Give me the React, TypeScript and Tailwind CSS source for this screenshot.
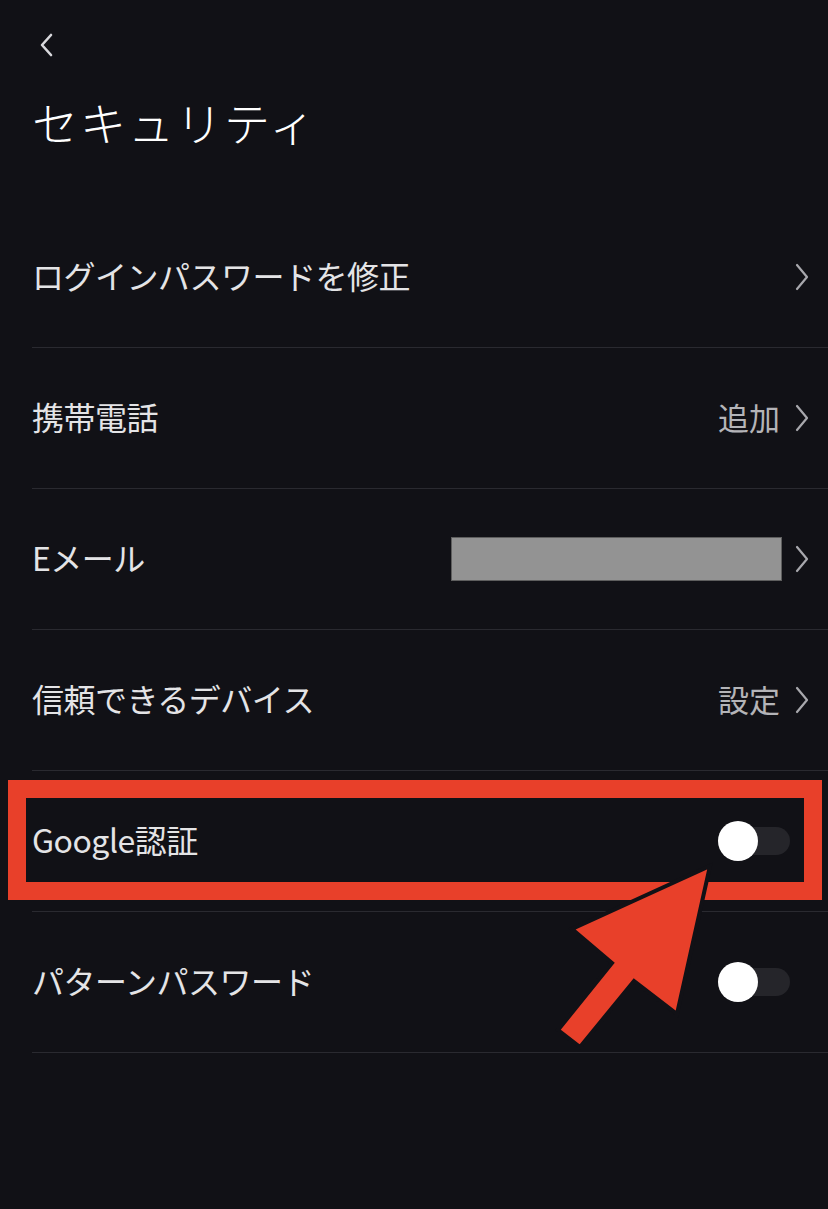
import React from "react";

const font = { fontFamily: '"Noto Sans CJK JP", "Noto Sans", sans-serif' };

function Chevron() {
  return (
    <svg width="16" height="28" viewBox="0 0 16 28" className="shrink-0">
      <path d="M3 2 L13 14 L3 26" fill="none" stroke="#a8a8ad" strokeWidth="2.2" strokeLinecap="round" strokeLinejoin="round" />
    </svg>
  );
}

function Toggle() {
  return (
    <div className="relative w-[72px] h-[28px] rounded-full bg-[#25252a]">
      <div className="absolute left-0 top-[-6px] w-[40px] h-[40px] rounded-full bg-white" />
    </div>
  );
}

function Row({ label, right }: { label: string; right: React.ReactNode }) {
  return (
    <div className="ml-8 h-[141px] border-b border-[#2a2a30] flex items-center justify-between">
      <span className="text-[32px] leading-none text-[#e4e4e6] tracking-[-0.5px] pb-[4px]">{label}</span>
      {right}
    </div>
  );
}

export default function App() {
  return (
    <div className="relative w-full h-[1209px] bg-[#111116] overflow-hidden" style={font}>
      <div className="pt-[32px] pl-[38px]">
        <svg width="18" height="26" viewBox="0 0 18 26">
          <path d="M13 3 L4 13 L13 23" fill="none" stroke="#d8d8dc" strokeWidth="2.6" strokeLinecap="round" strokeLinejoin="round" />
        </svg>
      </div>
      <h1 className="mt-[40px] ml-[32px] text-[46px] leading-none text-white font-light tracking-[2px]">セキュリティ</h1>
      <div className="mt-[63px]">
        <Row label="ログインパスワードを修正" right={<div className="pr-[18px]"><Chevron /></div>} />
        <Row
          label="携帯電話"
          right={
            <div className="flex items-center gap-[14px] pr-[18px]">
              <span className="text-[31px] leading-none text-[#b4b4b8] pb-[4px]">追加</span>
              <Chevron />
            </div>
          }
        />
        <Row
          label="Eメール"
          right={
            <div className="flex items-center gap-[12px] pr-[18px]">
              <div className="w-[331px] h-[44px] bg-[#939393] border border-[#5e5e5e]" />
              <Chevron />
            </div>
          }
        />
        <Row
          label="信頼できるデバイス"
          right={
            <div className="flex items-center gap-[14px] pr-[18px]">
              <span className="text-[31px] leading-none text-[#b4b4b8] pb-[4px]">設定</span>
              <Chevron />
            </div>
          }
        />
        <Row label="Google認証" right={<div className="pr-[38px]"><Toggle /></div>} />
        <Row label="パターンパスワード" right={<div className="pr-[38px]"><Toggle /></div>} />
      </div>

      <div className="absolute left-[8px] top-[780px] w-[814px] h-[120px] border-[18px] border-[#e8402a] pointer-events-none" />

      <svg className="absolute left-0 top-0 pointer-events-none" width="828" height="1209" viewBox="0 0 828 1209">
        <polygon
          points="710,866 677,1014 634,981 580,1047 558,1030 612,963 572,929"
          fill="#e8402a"
          stroke="#111116"
          strokeWidth="4"
          strokeLinejoin="miter"
        />
      </svg>
    </div>
  );
}
